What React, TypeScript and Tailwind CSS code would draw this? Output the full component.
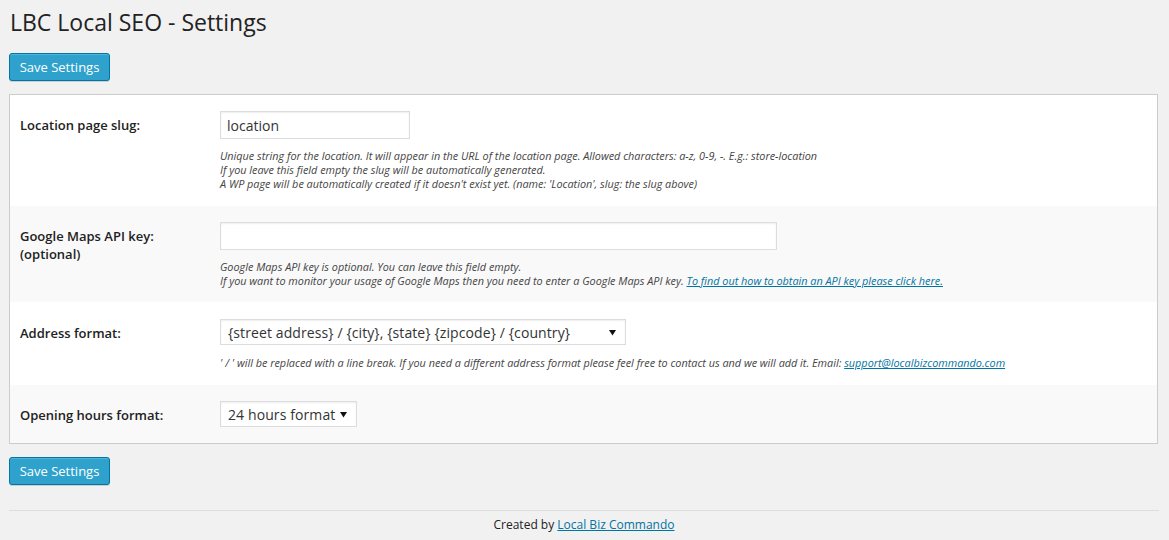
import React from "react";

const font = { fontFamily: "'Open Sans', 'Liberation Sans', sans-serif" };

function SaveButton() {
  return (
    <button
      type="button"
      className="h-[28px] w-[101px] rounded-[3px] border border-[#0074a2] bg-[#2ea2cc] text-[13px] leading-[26px] text-white shadow-[inset_0_1px_0_rgba(120,200,230,0.5),0_1px_0_rgba(0,0,0,0.15)]"
    >
      Save Settings
    </button>
  );
}

function Arrow() {
  return (
    <svg width="7" height="7" viewBox="0 0 7 7" className="shrink-0">
      <path d="M0 1 L7 1 L3.5 6.5 Z" fill="#111" />
    </svg>
  );
}

function FakeSelect({ value, width }: { value: string; width: string }) {
  return (
    <div
      className={`${width} flex h-[26px] items-center justify-between border border-[#ddd] bg-white pl-[7px] pr-[9px] text-[14px] tracking-[0.1px] text-[#333] shadow-[inset_0_1px_2px_rgba(0,0,0,0.07)]`}
    >
      <span className="whitespace-nowrap">{value}</span>
      <Arrow />
    </div>
  );
}

function Help({ children }: { children: React.ReactNode }) {
  return <div className="text-[10.85px] italic leading-[14px] text-[#444]">{children}</div>;
}

function Row({
  label,
  grey,
  className,
  children,
}: {
  label: React.ReactNode;
  grey?: boolean;
  className: string;
  children: React.ReactNode;
}) {
  return (
    <div className={`flex ${grey ? "bg-[#f9f9f9]" : "bg-white"} ${className}`}>
      <div className="w-[210px] shrink-0 pl-[10px] pt-[5px] text-[13px] font-semibold leading-[18px] text-[#222]">
        {label}
      </div>
      <div className="min-w-0 flex-1">{children}</div>
    </div>
  );
}

export default function App() {
  return (
    <div className="min-h-[540px] bg-[#f1f1f1] pl-[9px] pr-[10px] text-[13px] text-[#444]" style={font}>
      <h1 className="pt-[8px] pl-[1px] text-[23px] font-normal leading-[29px] text-[#222]">
        LBC Local SEO - Settings
      </h1>

      <div className="mt-[16px]">
        <SaveButton />
      </div>

      <div className="mt-[13px] mr-[1px] border border-[#ccc] bg-white">
        <Row label="Location page slug:" className="pt-4 pb-[15px]">
          <input
            readOnly
            value="location"
            className="h-[28px] w-[190px] border border-[#ddd] bg-white px-[6px] text-[14px] text-[#333] shadow-[inset_0_1px_2px_rgba(0,0,0,0.07)] outline-none"
          />
          <div className="mt-[10px]">
            <Help>
              Unique string for the location. It will appear in the URL of the location page. Allowed characters:
              a-z, 0-9, -. E.g.: store-location
              <br />
              If you leave this field empty the slug will be automatically generated.
              <br />
              A WP page will be automatically created if it doesn't exist yet. (name: 'Location', slug: the slug above)
            </Help>
          </div>
        </Row>

        <Row
          grey
          label={
            <>
              Google Maps API key:
              <br />
              (optional)
            </>
          }
          className="pt-4 pb-[14px]"
        >
          <input
            readOnly
            value=""
            className="h-[28px] w-[557px] border border-[#ddd] bg-white px-[6px] text-[14px] shadow-[inset_0_1px_2px_rgba(0,0,0,0.07)] outline-none"
          />
          <div className="mt-[10px]">
            <Help>
              Google Maps API key is optional. You can leave this field empty.
              <br />
              If you want to monitor your usage of Google Maps then you need to enter a Google Maps API key.{" "}
              <a className="text-[#0074a2] underline">To find out how to obtain an API key please click here.</a>
            </Help>
          </div>
        </Row>

        <Row label="Address format:" className="pt-[17px] pb-[15px]">
          <FakeSelect value="{street address} / {city}, {state} {zipcode} / {country}" width="w-[406px]" />
          <div className="mt-[11px]">
            <Help>
              ' / ' will be replaced with a line break. If you need a different address format please feel free to
              contact us and we will add it. Email:{" "}
              <a className="text-[#0074a2] underline">support@localbizcommando.com</a>
            </Help>
          </div>
        </Row>

        <Row grey label="Opening hours format:" className="pt-4 pb-4">
          <FakeSelect value="24 hours format" width="w-[137px]" />
        </Row>
      </div>

      <div className="mt-[13px]">
        <SaveButton />
      </div>

      <div className="mt-[25px] border-t border-[#ddd] pt-[5px] text-center text-[12px] leading-[18px] text-[#222]">
        Created by <a className="text-[#0074a2] underline">Local Biz Commando</a>
      </div>
    </div>
  );
}
